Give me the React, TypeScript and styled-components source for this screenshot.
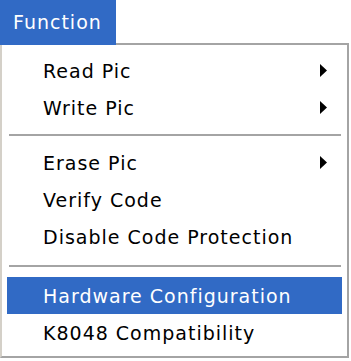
import React from "react";
import styled, { createGlobalStyle } from "styled-components";

const Global = createGlobalStyle`
  html, body { margin: 0; padding: 0; background: #ffffff; }
  body { font-family: "DejaVu Sans", Verdana, sans-serif; }
`;

const Page = styled.div`
  width: 351px;
  height: 361px;
  background: #ffffff;
  display: flex;
  flex-direction: column;
  overflow: hidden;
`;

const Tab = styled.div`
  width: 116px;
  height: 43px;
  background: #316ac5;
  color: #ffffff;
  font-size: 19px;
  letter-spacing: 1px;
  display: flex;
  align-items: center;
  padding-left: 13px;
  box-sizing: border-box;
`;

const Menu = styled.div`
  width: 349px;
  height: 315px;
  box-sizing: border-box;
  border-top: 2px solid #a4a4a4;
  border-right: 2px solid #a4a4a4;
  border-bottom: 2px solid #a4a4a4;
  border-left: 2px solid #d4d0c8;
  padding: 7px 5px 0 5px;
  display: flex;
  flex-direction: column;
  position: relative;
`;

const TopGap = styled.div`
  position: absolute;
  top: -2px;
  left: -2px;
  width: 116px;
  height: 2px;
  background: #316ac5;
`;

const Item = styled.div<{ $active?: boolean }>`
  height: 37px;
  flex: none;
  display: flex;
  align-items: center;
  padding-left: 36px;
  padding-right: 15px;
  font-size: 19px;
  letter-spacing: 1px;
  color: ${(p) => (p.$active ? "#ffffff" : "#000000")};
  background: ${(p) => (p.$active ? "#316ac5" : "transparent")};
`;

const Label = styled.span`
  flex: 1;
`;

const Separator = styled.div<{ $h: number }>`
  height: ${(p) => p.$h}px;
  flex: none;
  display: flex;
  align-items: center;
  padding: 0 1px 0 2px;
  &::after {
    content: "";
    flex: 1;
    height: 2px;
    background: #a4a4a4;
  }
`;

const Arrow = () => (
  <svg width="7" height="13" viewBox="0 0 7 13">
    <path d="M0 0 L7 6.5 L0 13 Z" fill="#000" />
  </svg>
);

export default function App() {
  return (
    <Page>
      <Global />
      <Tab>Function</Tab>
      <Menu>
        <TopGap />
        <Item>
          <Label>Read Pic</Label>
          <Arrow />
        </Item>
        <Item>
          <Label>Write Pic</Label>
          <Arrow />
        </Item>
        <Separator $h={18} />
        <Item>
          <Label>Erase Pic</Label>
          <Arrow />
        </Item>
        <Item>
          <Label>Verify Code</Label>
        </Item>
        <Item>
          <Label>Disable Code Protection</Label>
        </Item>
        <Separator $h={22} />
        <Item $active>
          <Label>Hardware Configuration</Label>
        </Item>
        <Item>
          <Label>K8048 Compatibility</Label>
        </Item>
      </Menu>
    </Page>
  );
}
